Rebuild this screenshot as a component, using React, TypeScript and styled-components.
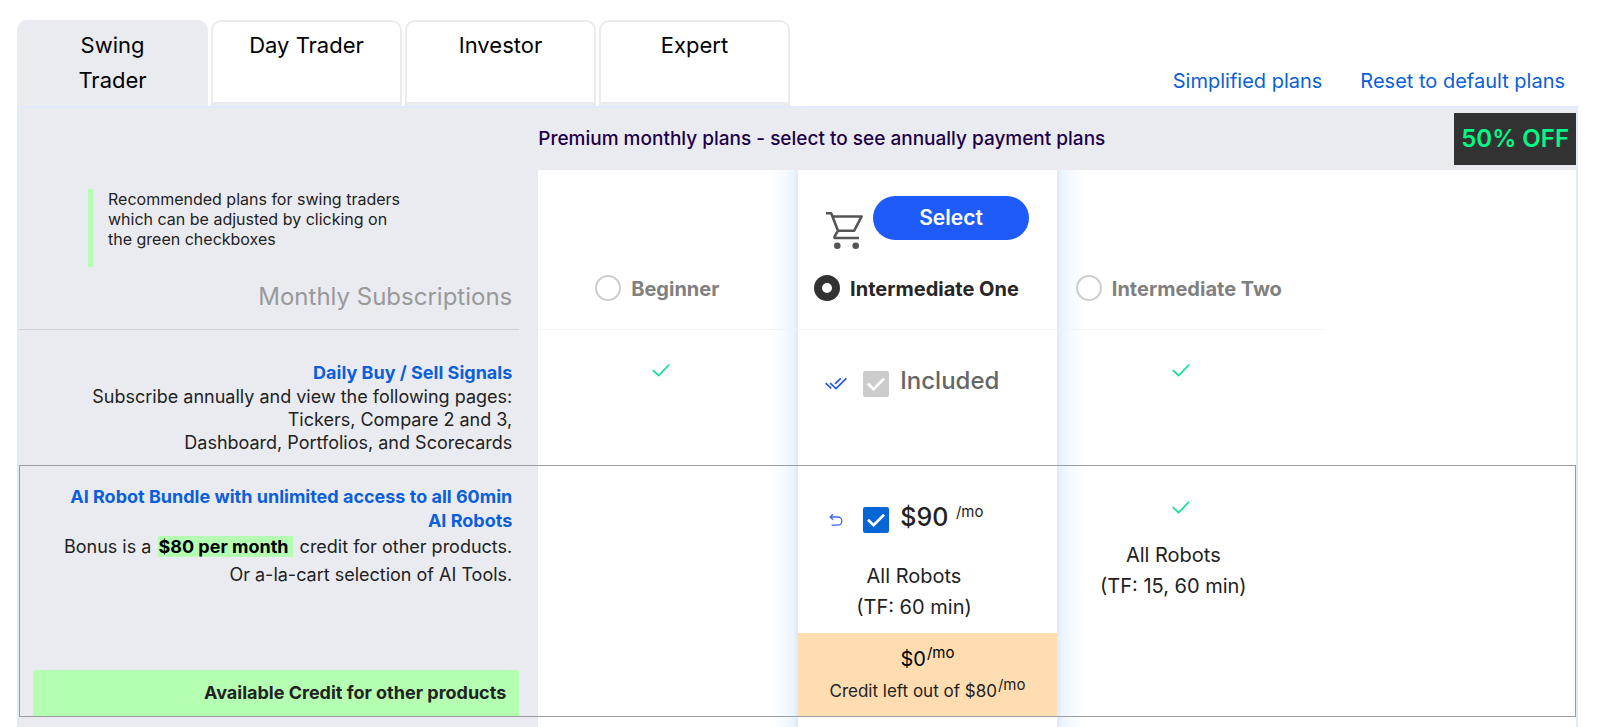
import React, { useState } from "react";
import styled, { createGlobalStyle, css } from "styled-components";

const GlobalStyle = createGlobalStyle`
  *, *::before, *::after { box-sizing: border-box; }
  body {
    margin: 0;
    background: #fff;
    color: #222;
    font-family: Inter, "Liberation Sans", sans-serif;
  }
`;

const colors = {
  panel: "#eaebf1",
  frame: "#e1eafb",
  link: "#0b5fd9",
  green: "#b4ffb1",
  check: "#00e38c",
};

const Page = styled.main`
  padding: 20px 22px 0 17px;
`;

const TopBar = styled.header`
  display: flex;
  justify-content: space-between;
  align-items: stretch;
`;

const Tabs = styled.div`
  display: flex;
  gap: 3px;
`;

const Tab = styled.button<{ $active: boolean }>`
  display: flex;
  justify-content: center;
  align-items: flex-start;
  width: 191px;
  min-height: 86px;
  padding: 6px 34px 0;
  border: 2px solid ${colors.panel};
  border-bottom-width: 4px;
  border-radius: 10px 10px 0 0;
  background: ${(p) => (p.$active ? colors.panel : "#fff")};
  color: #000;
  font: 400 22px/35px Inter, sans-serif;
  text-align: center;
  cursor: pointer;
`;

const Links = styled.nav`
  display: flex;
  align-items: flex-end;
  gap: 38px;
  padding: 0 13px 13px 0;
`;

const TopLink = styled.a`
  color: ${colors.link};
  font-size: 20px;
  line-height: 24px;
  text-decoration: none;
`;

const Panel = styled.section`
  border: 2px solid ${colors.frame};
  border-bottom: 0;
`;

const PlanTable = styled.table`
  width: 100%;
  table-layout: fixed;
  border-collapse: separate;
  border-spacing: 0;
`;

const Col = styled.col<{ $width?: string }>`
  width: ${(p) => p.$width ?? "auto"};
`;

const Row = styled.tr<{ $outlined?: boolean }>`
  ${(p) =>
    p.$outlined &&
    css`
      outline: 1px solid #9b9ca0;
      outline-offset: -1px;
    `}
`;

const Banner = styled.th`
  height: 62px;
  padding: 0;
  background: ${colors.panel};
`;

const BannerContent = styled.div`
  display: flex;
  justify-content: space-between;
  align-items: center;
`;

const BannerText = styled.span`
  color: #1d0049;
  font-size: 19px;
  font-weight: 500;
  line-height: 24px;
`;

const Discount = styled.strong`
  padding: 8px 7px;
  background: #323232;
  color: #00fa86;
  font-size: 24px;
  font-weight: 600;
  line-height: 36px;
`;

const SideCell = styled.th<{ $height: number }>`
  height: ${(p) => p.$height}px;
  padding: 0 19px 0 0;
  background: ${colors.panel};
  font-weight: 400;
  text-align: right;
  vertical-align: top;
`;

const SideContent = styled.div<{ $top: number; $line?: boolean }>`
  display: flex;
  flex-direction: column;
  height: 100%;
  padding-top: ${(p) => p.$top}px;
  border-bottom: ${(p) => (p.$line ? "1px solid #cdcfd6" : "0")};
`;

const Note = styled.p`
  width: 330px;
  min-height: 78px;
  margin: 0 0 0 69px;
  padding-left: 15px;
  border-left: 5px solid ${colors.green};
  font-size: 16px;
  line-height: 20px;
  text-align: left;
`;

const GroupTitle = styled.h2`
  margin: 14px 7px 0 0;
  color: #999;
  font-size: 24px;
  font-weight: 400;
  line-height: 32px;
`;

const FeatureTitle = styled.a`
  padding: 0 7px 0 30px;
  color: ${colors.link};
  font-size: 18px;
  font-weight: 700;
  line-height: 24px;
  text-decoration: none;
`;

const FeatureText = styled.p<{ $loose?: boolean }>`
  margin: 0;
  padding-right: 7px;
  font-size: 18px;
  line-height: ${(p) => (p.$loose ? 28 : 23)}px;
`;

const Highlight = styled.mark`
  padding-right: 4px;
  margin: 0 2px;
  background: ${colors.green};
  color: #000;
  font-weight: 700;
`;

const CreditLabel = styled.strong`
  margin: auto 0 0 14px;
  padding: 0 13px 2px 0;
  background: ${colors.green};
  font-size: 18px;
  font-weight: 700;
  line-height: 45px;
`;

const glow = {
  left: css`
    background: linear-gradient(to left, #deecfe 2px, #eaf4ff 4px, #f7fbff 16px, #fff 30px);
  `,
  right: css`
    background: linear-gradient(to right, #deecfe 2px, #eaf4ff 4px, #f7fbff 16px, #fff 30px);
  `,
};

const PlanCell = styled.td<{ $glow?: "left" | "right"; $line?: boolean }>`
  height: 1px;
  padding: 0;
  vertical-align: top;
  background: #fff;
  ${(p) => p.$glow && glow[p.$glow]}
  border-bottom: ${(p) => (p.$line ? "1px solid #f2f3f7" : "0")};
`;

const CellStack = styled.div<{ $top?: number; $shift?: number }>`
  display: flex;
  flex-direction: column;
  align-items: center;
  height: 100%;
  padding-top: ${(p) => p.$top ?? 0}px;
  padding-right: ${(p) => p.$shift ?? 0}px;
`;

const PlanHead = styled.div`
  height: 105px;
  padding: 26px 2px 0 0;
`;

const Purchase = styled.div`
  display: flex;
  gap: 9px;
  height: 55px;
`;

const CartSvg = styled.svg`
  align-self: flex-end;
  width: 40px;
  height: 40px;
`;

const SelectButton = styled.button`
  align-self: flex-start;
  width: 156px;
  height: 44px;
  border: 0;
  border-radius: 22px;
  background: #1f5bfa;
  color: #fff;
  font: 600 21px/24px Inter, sans-serif;
  cursor: pointer;
`;

const PlanOption = styled.label<{ $active: boolean }>`
  display: flex;
  align-items: flex-start;
  gap: 10px;
  margin-right: 22px;
  color: ${(p) => (p.$active ? "#262626" : "#808080")};
  font-size: 20px;
  font-weight: 700;
  line-height: 29px;
  white-space: nowrap;
  cursor: pointer;
`;

const Radio = styled.input`
  appearance: none;
  width: 26px;
  height: 26px;
  margin: 0;
  border: 2px solid #ccc;
  border-radius: 50%;
  background: #fff;
  &:checked {
    border: 8px solid #323232;
  }
`;

const OptionRow = styled.div`
  display: flex;
  align-items: center;
  align-self: flex-start;
  height: 36px;
  padding-left: 26px;
`;

const IconSlot = styled.span`
  display: flex;
  justify-content: center;
  width: 23px;
  margin-right: 16px;
`;

const CheckWrap = styled.span`
  display: grid;
  width: 26px;
  height: 26px;
  > * {
    grid-area: 1 / 1;
  }
  svg {
    pointer-events: none;
  }
`;

const Checkbox = styled.input`
  appearance: none;
  width: 26px;
  height: 26px;
  margin: 0;
  border: 2px solid #0666d6;
  border-radius: 2px;
  &:checked {
    background: #0666d6;
  }
  &:disabled {
    border-color: #ccc;
    background: #ccc;
  }
`;

const OptionLabel = styled.label<{ $muted?: boolean }>`
  padding: 0 0 6px 11px;
  color: ${(p) => (p.$muted ? "#666" : "#222")};
  font-size: ${(p) => (p.$muted ? 24 : 25)}px;
  font-weight: 500;
  line-height: 30px;
`;

const PerMonth = styled.sup`
  margin-left: 1px;
  font-size: 15px;
  font-weight: 400;
  line-height: 0;
`;

const Scope = styled.p<{ $shift: number }>`
  margin: 23px ${(p) => p.$shift}px 0 0;
  font-size: 20px;
  line-height: 31px;
  text-align: center;
`;

const CreditBox = styled.div`
  width: 100%;
  margin-top: auto;
  padding: 10px 0;
  background: #ffddb0;
  line-height: 32px;
  text-align: center;
`;

const CreditValue = styled.div`
  color: #000;
  font-size: 20px;
`;

const CreditHint = styled.div`
  font-size: 17px;
`;

const FillerCell = styled.td<{ $side?: boolean; $glow?: "left" | "right" }>`
  height: 10px;
  padding: 0;
  background: ${(p) => (p.$side ? colors.panel : "#fff")};
  ${(p) => p.$glow && glow[p.$glow]}
`;

const CartIcon = () => (
  <CartSvg viewBox="0 0 40 40" fill="none" stroke="#555" strokeWidth="2.6" aria-hidden="true">
    <path d="M2 2.3H7.2L14 19.7H30.2L37.6 5.5H8.6M14 19.7L10.6 25.6Q10 27 11.6 27H35" strokeLinejoin="round" />
    <circle cx="13.3" cy="34.8" r="3.3" fill="#555" stroke="none" />
    <circle cx="31.7" cy="34.8" r="3.3" fill="#555" stroke="none" />
  </CartSvg>
);

const GreenCheck = () => (
  <svg width="20" height="20" viewBox="0 0 20 20" fill="none" stroke={colors.check} strokeWidth="1.6" role="img" aria-label="Included">
    <path d="M1.8 10.2L7.6 15.6L18 4.8" />
  </svg>
);

const DoubleCheck = () => (
  <svg width="22" height="14" viewBox="0 0 22 14" fill="none" stroke="#2458f0" strokeWidth="1.7" aria-hidden="true">
    <path d="M0.6 6.2L6.2 11.4M5.2 6.2L11 11.6L21.3 1.3M10 6.8L15.8 1.3" />
  </svg>
);

const UndoIcon = () => (
  <svg width="14" height="14" viewBox="0 0 14 14" fill="none" stroke="#3f66f2" strokeWidth="1.3" aria-hidden="true">
    <path d="M4 1.2L1.2 4L4 6.8M1.4 4H8.8A4.1 4.1 0 0 1 8.8 12.2H2.6" />
  </svg>
);

const WhiteCheck = () => (
  <svg width="26" height="26" viewBox="0 0 26 26" fill="none" stroke="#fff" strokeWidth="2.7" aria-hidden="true">
    <path d="M5 12.8L10.6 18.2L21 7.8" />
  </svg>
);

const tabs = ["Swing Trader", "Day Trader", "Investor", "Expert"];
const plans = ["Beginner", "Intermediate One", "Intermediate Two"];

export default function App() {
  const [tab, setTab] = useState(tabs[0]);
  const [plan, setPlan] = useState(plans[1]);
  const [bundle, setBundle] = useState(true);

  const glowOf = (i: number) => (i === 0 ? "left" : i === 2 ? "right" : undefined);

  return (
    <Page>
      <GlobalStyle />
      <TopBar>
        <Tabs role="tablist">
          {tabs.map((t) => (
            <Tab key={t} role="tab" aria-selected={t === tab} $active={t === tab} onClick={() => setTab(t)}>
              {t}
            </Tab>
          ))}
        </Tabs>
        <Links>
          <TopLink href="#simplified">Simplified plans</TopLink>
          <TopLink href="#reset">Reset to default plans</TopLink>
        </Links>
      </TopBar>

      <Panel>
        <PlanTable>
          <colgroup>
            <Col $width="33.35%" />
            <Col $width="16.7%" />
            <Col $width="16.6%" />
            <Col $width="17.1%" />
            <Col />
          </colgroup>
          <thead>
            <Row>
              <Banner />
              <Banner colSpan={4}>
                <BannerContent>
                  <BannerText>Premium monthly plans - select to see annually payment plans</BannerText>
                  <Discount>50% OFF</Discount>
                </BannerContent>
              </Banner>
            </Row>
          </thead>
          <tbody>
            <Row>
              <SideCell $height={160} scope="row">
                <SideContent $top={19} $line>
                  <Note>
                    Recommended plans for swing traders
                    <br />
                    which can be adjusted by clicking on
                    <br />
                    the green checkboxes
                  </Note>
                  <GroupTitle>Monthly Subscriptions</GroupTitle>
                </SideContent>
              </SideCell>
              {plans.map((name, i) => (
                <PlanCell key={name} $glow={glowOf(i)} $line>
                  <CellStack>
                    <PlanHead>
                      {name === plan && (
                        <Purchase>
                          <CartIcon />
                          <SelectButton>Select</SelectButton>
                        </Purchase>
                      )}
                    </PlanHead>
                    <PlanOption $active={name === plan}>
                      <Radio type="radio" name="plan" checked={name === plan} onChange={() => setPlan(name)} />
                      {name}
                    </PlanOption>
                  </CellStack>
                </PlanCell>
              ))}
              <PlanCell />
            </Row>

            <Row>
              <SideCell $height={135} scope="row">
                <SideContent $top={31}>
                  <FeatureTitle href="#signals">Daily Buy / Sell Signals</FeatureTitle>
                  <FeatureText>
                    Subscribe annually and view the following pages:
                    <br />
                    Tickers, Compare 2 and 3,
                    <br />
                    Dashboard, Portfolios, and Scorecards
                  </FeatureText>
                </SideContent>
              </SideCell>
              <PlanCell $glow="left">
                <CellStack $top={30} $shift={15}>
                  <GreenCheck />
                </CellStack>
              </PlanCell>
              <PlanCell>
                <CellStack $top={36}>
                  <OptionRow>
                    <IconSlot>
                      <DoubleCheck />
                    </IconSlot>
                    <CheckWrap>
                      <Checkbox id="signals" type="checkbox" checked disabled readOnly />
                      <WhiteCheck />
                    </CheckWrap>
                    <OptionLabel htmlFor="signals" $muted>
                      Included
                    </OptionLabel>
                  </OptionRow>
                </CellStack>
              </PlanCell>
              <PlanCell $glow="right">
                <CellStack $top={30} $shift={18}>
                  <GreenCheck />
                </CellStack>
              </PlanCell>
              <PlanCell />
            </Row>

            <Row $outlined>
              <SideCell $height={252} scope="row">
                <SideContent $top={20}>
                  <FeatureTitle href="#robots">AI Robot Bundle with unlimited access to all 60min AI Robots</FeatureTitle>
                  <FeatureText $loose>
                    Bonus is a <Highlight>$80 per month</Highlight> credit for other products.
                    <br />
                    Or a-la-cart selection of AI Tools.
                  </FeatureText>
                  <CreditLabel>Available Credit for other products</CreditLabel>
                </SideContent>
              </SideCell>
              <PlanCell $glow="left" />
              <PlanCell>
                <CellStack $top={37}>
                  <OptionRow>
                    <IconSlot>
                      <UndoIcon />
                    </IconSlot>
                    <CheckWrap>
                      <Checkbox id="bundle" type="checkbox" checked={bundle} onChange={() => setBundle(!bundle)} />
                      <WhiteCheck />
                    </CheckWrap>
                    <OptionLabel htmlFor="bundle">
                      $90 <PerMonth>/mo</PerMonth>
                    </OptionLabel>
                  </OptionRow>
                  <Scope $shift={27}>
                    All Robots
                    <br />
                    (TF: 60 min)
                  </Scope>
                  <CreditBox>
                    <CreditValue>
                      $0<PerMonth>/mo</PerMonth>
                    </CreditValue>
                    <CreditHint>
                      Credit left out of $80<PerMonth>/mo</PerMonth>
                    </CreditHint>
                  </CreditBox>
                </CellStack>
              </PlanCell>
              <PlanCell $glow="right">
                <CellStack $top={32} $shift={18}>
                  <GreenCheck />
                  <Scope $shift={15}>
                    All Robots
                    <br />
                    (TF: 15, 60 min)
                  </Scope>
                </CellStack>
              </PlanCell>
              <PlanCell />
            </Row>

            <Row>
              <FillerCell $side />
              <FillerCell $glow="left" />
              <FillerCell />
              <FillerCell $glow="right" />
              <FillerCell />
            </Row>
          </tbody>
        </PlanTable>
      </Panel>
    </Page>
  );
}
